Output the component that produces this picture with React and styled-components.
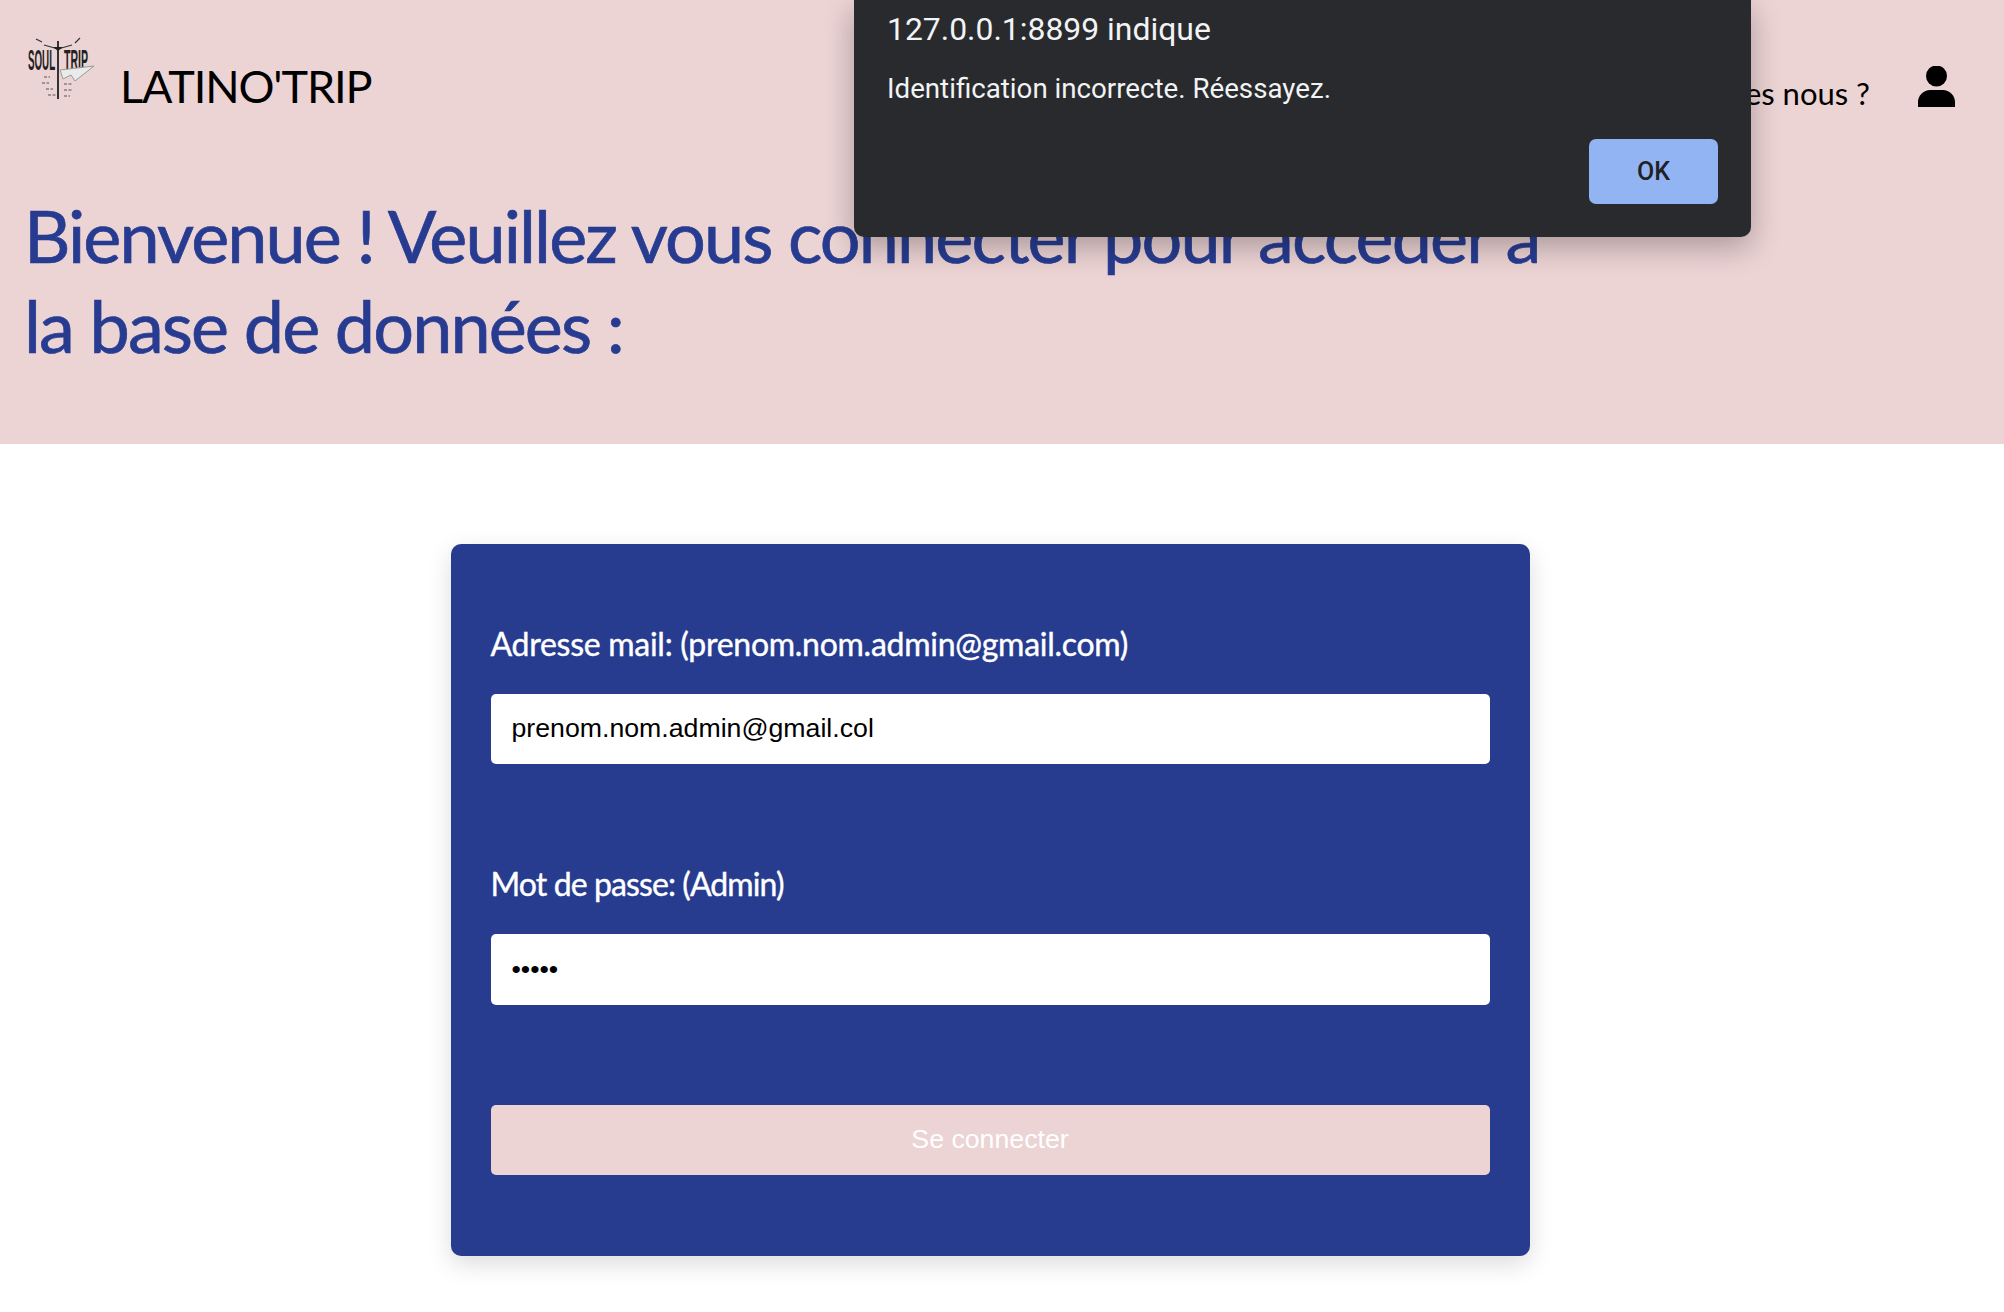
import React from "react";
import styled, { createGlobalStyle } from "styled-components";

const Global = createGlobalStyle`
  html, body { margin: 0; padding: 0; background: #fff; overflow: hidden; }
  * { box-sizing: border-box; }
`;
const Page = styled.div`
  position: relative;
  width: 2004px;
  height: 1312px;
  overflow: hidden;
  font-family: "Lato", "Noto Sans", sans-serif;
`;
const Banner = styled.header`
  height: 444px;
  background: #ecd3d4;
  padding: 0 26px;
  display: flex;
  flex-direction: column;
`;
const TopBar = styled.div`
  height: 172px;
  margin-bottom: 18px;
  display: flex;
  align-items: center;
  justify-content: space-between;
`;
const Brand = styled.div`
  display: flex;
  align-items: center;
  gap: 24px;
`;
const LogoMark = styled.svg`
  display: block;
  margin: 0 0 34px 2px;
`;
const BrandName = styled.span`
  font-size: 45px;
  letter-spacing: -1.1px;
  color: #000;
  line-height: 1;
  margin-top: 1px;
`;
const Nav = styled.nav`
  display: flex;
  align-items: center;
  gap: 48px;
  padding-right: 23px;
`;
const NavLink = styled.a`
  font-size: 31px;
  color: #000;
  margin-top: 13px;
`;
const Heading = styled.h1`
  margin: 0 0 0 -2px;
  width: 1545px;
  font-size: 72px;
  font-weight: 400;
  letter-spacing: -1.9px;
  -webkit-text-stroke: 0.7px #273c91;
  line-height: 90px;
  color: #273c91;
`;
const Main = styled.main`
  display: flex;
  justify-content: center;
  padding: 100px 0 0 0;
`;
const Card = styled.form`
  width: 1079px;
  height: 712px;
  margin-right: 24px;
  background: #273c8f;
  border-radius: 10px;
  box-shadow: 0 8px 24px rgba(0, 0, 0, 0.14);
  padding: 79.5px 40px 0;
  display: flex;
  flex-direction: column;
  gap: 100px;
`;
const Field = styled.div`
  display: flex;
  flex-direction: column;
  gap: 30px;
`;
const Label = styled.label`
  height: 40px;
  line-height: 40px;
  font-size: 32px;
  letter-spacing: ${(p) => p.$tracking}px;
  -webkit-text-stroke: 0.4px #fff;
  color: #fff;
`;
const Input = styled.input`
  height: 70.5px;
  width: 100%;
  border: 0;
  outline: 0;
  border-radius: 5px;
  background: #fff;
  color: #000;
  padding: 0 21px;
  font-family: "Liberation Sans", Arial, sans-serif;
  font-size: 26.7px;
`;
const Submit = styled.button`
  height: 70.5px;
  width: 100%;
  border: 0;
  border-radius: 5px;
  background: #ecd3d4;
  color: #fff;
  font-family: "Liberation Sans", Arial, sans-serif;
  font-size: 26.7px;
`;
const Alert = styled.div`
  position: absolute;
  top: 0;
  left: 854px;
  width: 897px;
  height: 237px;
  padding: 0 33px;
  background: #292a2d;
  border-radius: 0 0 10px 10px;
  box-shadow: 0 10px 30px rgba(0, 0, 0, 0.28);
  color: #f1f3f4;
  font-family: "Roboto", "Inter", sans-serif;
  display: flex;
  flex-direction: column;
`;
const AlertTitle = styled.div`
  font-size: 31.9px;
  line-height: 36px;
  margin-top: 11px;
`;
const AlertText = styled.div`
  font-size: 27.7px;
  line-height: 36px;
  margin-top: 24px;
`;
const AlertActions = styled.div`
  display: flex;
  justify-content: flex-end;
  margin-top: 32px;
`;
const AlertButton = styled.button`
  width: 129px;
  height: 65px;
  border: 0;
  border-radius: 7px;
  background: #93b4f3;
  color: #202124;
  font-family: "Roboto", sans-serif;
  font-weight: 500;
  font-size: 25px;
`;
const LogoWord = styled.text`
  font-family: "Liberation Sans", sans-serif;
  font-weight: 700;
  font-size: 29px;
  fill: #222;
`;

const Logo = () => (
  <LogoMark width="68" height="64" viewBox="0 0 68 64" aria-label="Soul Trip">
    <path d="M30 4v58" stroke="#333" strokeWidth="2" />
    <path d="M16 8l14 4 14-4M8 2l6 3M52 1l-5 5" stroke="#333" strokeWidth="1.2" fill="none" />
    <path d="M25 10h10l-5 4z" fill="#222" />
    <LogoWord transform="translate(0 33) scale(0.337 1)">SOUL</LogoWord>
    <LogoWord transform="translate(36 33) scale(0.364 1)">TRIP</LogoWord>
    <path d="M32 33l34-4-19 15-4-6-8 4z" fill="#e9ebe9" stroke="#999" strokeWidth="1" />
    <path d="M16 40h6M14 46h7M18 52h7M20 58h8M36 47h8M36 53h9M36 59h6" stroke="#555" strokeWidth="1" strokeDasharray="3 1.500" />
  </LogoMark>
);
const UserIcon = () => (
  <svg width="37" height="41" viewBox="0 0 37 41" fill="#000">
    <circle cx="18.5" cy="10" r="10.5" />
    <path d="M0 41v-5C0 29 6 24 12 24h13c6 0 12 5 12 12v5z" />
  </svg>
);

export default function App() {
  return (
    <Page>
      <Global />
      <Banner>
        <TopBar>
          <Brand>
            <Logo />
            <BrandName>LATINO'TRIP</BrandName>
          </Brand>
          <Nav>
            <NavLink>Qui sommes nous ?</NavLink>
            <UserIcon />
          </Nav>
        </TopBar>
        <Heading>Bienvenue ! Veuillez vous connecter pour accéder à la base de données :</Heading>
      </Banner>
      <Main>
        <Card onSubmit={(e) => e.preventDefault()}>
          <Field>
            <Label $tracking={-0.27}>Adresse mail: (prenom.nom.admin@gmail.com)</Label>
            <Input type="text" value="prenom.nom.admin@gmail.col" readOnly />
          </Field>
          <Field>
            <Label $tracking={-0.9}>Mot de passe: (Admin)</Label>
            <Input type="password" value="Admin" readOnly />
          </Field>
          <Submit type="submit">Se connecter</Submit>
        </Card>
      </Main>
      <Alert role="alertdialog">
        <AlertTitle>127.0.0.1:8899 indique</AlertTitle>
        <AlertText>Identification incorrecte. Réessayez.</AlertText>
        <AlertActions>
          <AlertButton>OK</AlertButton>
        </AlertActions>
      </Alert>
    </Page>
  );
}
